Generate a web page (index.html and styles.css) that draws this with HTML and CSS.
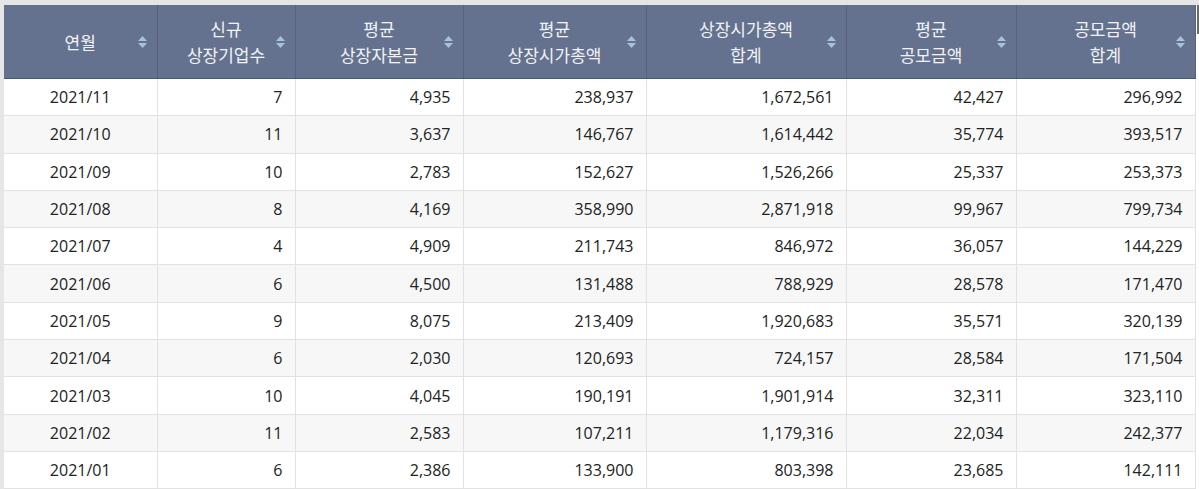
FILE: index.html
```html
<!DOCTYPE html>
<html lang="ko">
<head>
<meta charset="utf-8">
<title>월별 신규상장 현황</title>
<link rel="stylesheet" href="styles.css">
</head>
<body>
<div class="frame">
  <div class="scroll-thumb"></div>
  <table class="grid">
    <colgroup>
      <col class="w1"><col class="w2"><col class="w3"><col class="w4"><col class="w5"><col class="w6"><col class="w7">
    </colgroup>
    <thead>
      <tr>
        <th><span class="lbl">연월</span><svg class="sort" viewBox="0 0 9 12" width="9" height="12"><path d="M4.5 0 L9 5 L0 5 Z M0 7 L9 7 L4.5 12 Z"/></svg></th>
        <th><span class="lbl">신규<br>상장기업수</span><svg class="sort" viewBox="0 0 9 12" width="9" height="12"><path d="M4.5 0 L9 5 L0 5 Z M0 7 L9 7 L4.5 12 Z"/></svg></th>
        <th><span class="lbl">평균<br>상장자본금</span><svg class="sort" viewBox="0 0 9 12" width="9" height="12"><path d="M4.5 0 L9 5 L0 5 Z M0 7 L9 7 L4.5 12 Z"/></svg></th>
        <th><span class="lbl">평균<br>상장시가총액</span><svg class="sort" viewBox="0 0 9 12" width="9" height="12"><path d="M4.5 0 L9 5 L0 5 Z M0 7 L9 7 L4.5 12 Z"/></svg></th>
        <th><span class="lbl">상장시가총액<br>합계</span><svg class="sort" viewBox="0 0 9 12" width="9" height="12"><path d="M4.5 0 L9 5 L0 5 Z M0 7 L9 7 L4.5 12 Z"/></svg></th>
        <th><span class="lbl">평균<br>공모금액</span><svg class="sort" viewBox="0 0 9 12" width="9" height="12"><path d="M4.5 0 L9 5 L0 5 Z M0 7 L9 7 L4.5 12 Z"/></svg></th>
        <th><span class="lbl">공모금액<br>합계</span><svg class="sort" viewBox="0 0 9 12" width="9" height="12"><path d="M4.5 0 L9 5 L0 5 Z M0 7 L9 7 L4.5 12 Z"/></svg></th>
      </tr>
    </thead>
    <tbody>
      <tr><td class="date">2021/11</td><td>7</td><td>4,935</td><td>238,937</td><td>1,672,561</td><td>42,427</td><td>296,992</td></tr>
      <tr><td class="date">2021/10</td><td>11</td><td>3,637</td><td>146,767</td><td>1,614,442</td><td>35,774</td><td>393,517</td></tr>
      <tr><td class="date">2021/09</td><td>10</td><td>2,783</td><td>152,627</td><td>1,526,266</td><td>25,337</td><td>253,373</td></tr>
      <tr><td class="date">2021/08</td><td>8</td><td>4,169</td><td>358,990</td><td>2,871,918</td><td>99,967</td><td>799,734</td></tr>
      <tr><td class="date">2021/07</td><td>4</td><td>4,909</td><td>211,743</td><td>846,972</td><td>36,057</td><td>144,229</td></tr>
      <tr><td class="date">2021/06</td><td>6</td><td>4,500</td><td>131,488</td><td>788,929</td><td>28,578</td><td>171,470</td></tr>
      <tr><td class="date">2021/05</td><td>9</td><td>8,075</td><td>213,409</td><td>1,920,683</td><td>35,571</td><td>320,139</td></tr>
      <tr><td class="date">2021/04</td><td>6</td><td>2,030</td><td>120,693</td><td>724,157</td><td>28,584</td><td>171,504</td></tr>
      <tr><td class="date">2021/03</td><td>10</td><td>4,045</td><td>190,191</td><td>1,901,914</td><td>32,311</td><td>323,110</td></tr>
      <tr><td class="date">2021/02</td><td>11</td><td>2,583</td><td>107,211</td><td>1,179,316</td><td>22,034</td><td>242,377</td></tr>
      <tr><td class="date">2021/01</td><td>6</td><td>2,386</td><td>133,900</td><td>803,398</td><td>23,685</td><td>142,111</td></tr>
    </tbody>
  </table>
</div>
</body>
</html>
```

FILE: styles.css
```css
html, body {
  margin: 0;
  padding: 0;
  background: #ffffff;
}

.frame {
  position: relative;
  border-top: 5px solid #e6e6e6;
  border-left: 4px solid #e6e6e6;
  padding-right: 4px;
  height: 484px;
  overflow: hidden;
}

.scroll-thumb {
  position: absolute;
  top: -5px;
  right: 0;
  width: 2px;
  height: 34px;
  background: #6b6b6b;
}

.grid {
  border-collapse: collapse;
  table-layout: fixed;
  width: 1191px;
  font-family: "Open Sans", "Noto Sans CJK KR", sans-serif;
}

.w1 { width: 153px; }
.w2 { width: 138px; }
.w3 { width: 168px; }
.w4 { width: 183px; }
.w5 { width: 200px; }
.w6 { width: 170px; }
.w7 { width: 179px; }

.grid th {
  position: relative;
  height: 73px;
  padding: 0 24px;
  background: #65728f;
  color: #f2f3f6;
  font-family: "Noto Sans CJK KR", "Open Sans", sans-serif;
  font-size: 17px;
  font-weight: 400;
  line-height: 26px;
  text-align: center;
  vertical-align: middle;
  border-left: 1px solid #56627e;
  border-right: 1px solid #56627e;
  border-bottom: 1px solid #4b5773;
}

.grid th:first-child {
  border-left: none;
}

.lbl {
  display: inline-block;
}

.sort {
  position: absolute;
  right: 10px;
  top: 50%;
  margin-top: -6px;
  fill: #a4c3de;
}

.grid td {
  height: 36.3px;
  padding: 0 12px 0 8px;
  font-size: 16px;
  color: #222222;
  text-align: right;
  vertical-align: middle;
  border: 1px solid #e2e2e2;
  border-top: none;
  white-space: nowrap;
}

.grid td:first-child {
  border-left: none;
}

.grid td.date {
  text-align: center;
  padding: 0;
}

.grid tbody tr:nth-child(even) td {
  background: #f7f7f7;
}
```
